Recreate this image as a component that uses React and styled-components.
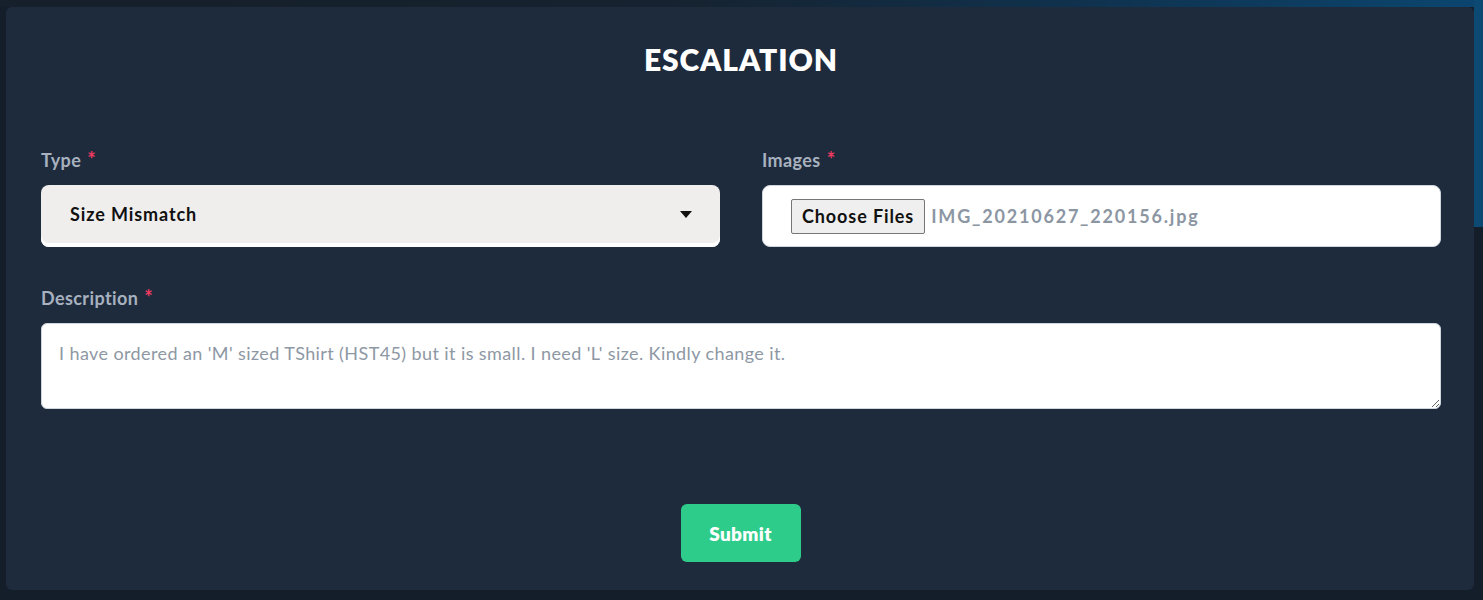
import React from 'react';
import styled, { createGlobalStyle } from 'styled-components';

const GlobalStyle = createGlobalStyle`
  html, body {
    margin: 0;
    padding: 0;
    height: 600px;
    overflow: hidden;
    font-family: Lato, "Open Sans", Arial, sans-serif;
    background: #141d2a;
  }
  * { box-sizing: border-box; }
`;

const Page = styled.div`
  height: 600px;
  padding: 7px 9px 10px 6px;
  background:
    linear-gradient(180deg, #0c4a74 0px, #0c4a74 227px, transparent 227px) right top / 9px 100% no-repeat,
    linear-gradient(90deg, #161f2c 0%, #16222f 45%, #0f3350 75%, #0b4670 100%) top / 100% 7px no-repeat,
    #141d2a;
`;

const Card = styled.form`
  height: 583px;
  background: #1e2b3c;
  border-radius: 6px;
  padding: 38px 33px 0 35px;
  display: flex;
  flex-direction: column;
`;

const Title = styled.h2`
  margin: 0 0 77px;
  text-align: center;
  color: #ffffff;
  font-size: 30px;
  font-weight: 800;
  letter-spacing: 0.9px;
  line-height: 28px;
`;

const Row = styled.div`
  display: grid;
  grid-template-columns: 1fr 1fr;
  gap: 42px;
  margin-bottom: 41px;
`;

const Field = styled.div`
  display: flex;
  flex-direction: column;
`;

const Label = styled.label`
  height: 20px;
  color: #a7b1bf;
  font-size: 18px;
  font-weight: 700;
  letter-spacing: 0.4px;
  line-height: 20px;
  margin-bottom: 15px;

  span {
    color: #ee3a62;
    font-size: 20px;
    line-height: 0;
    margin-left: 6px;
  }
`;

const SelectBox = styled.div`
  height: 62px;
  background: #efeeec;
  border-radius: 8px;
  box-shadow: inset 0 -4px 0 #ffffff;
  display: flex;
  align-items: center;
  justify-content: space-between;
  padding: 0 28px 4px 29px;
  color: #111111;
  font-size: 18px;
  font-weight: 700;
  letter-spacing: 0.9px;
`;

const FileBox = styled.div`
  height: 62px;
  background: #ffffff;
  border: 1px solid #cfd6dd;
  border-radius: 8px;
  display: flex;
  align-items: center;
  padding: 0 0 0 28px;
  gap: 6px;
`;

const FileButton = styled.button`
  height: 35px;
  padding: 0 10px;
  background: #efefef;
  border: 1px solid #767676;
  border-radius: 2px;
  color: #111111;
  font-family: inherit;
  font-size: 18px;
  font-weight: 700;
  letter-spacing: 0.9px;
`;

const FileName = styled.span`
  color: #8c96a3;
  font-size: 18px;
  font-weight: 700;
  letter-spacing: 1.8px;
`;

const TextArea = styled.textarea`
  height: 86px;
  width: 100%;
  resize: vertical;
  background: #ffffff;
  border: 1px solid #cfd6dd;
  border-radius: 6px;
  padding: 18px 17px;
  font-family: inherit;
  font-size: 18px;
  letter-spacing: 0.4px;
  outline: none;

  &::placeholder {
    color: #8e98a4;
  }
`;

const Footer = styled.div`
  display: flex;
  justify-content: center;
  margin-top: 95px;
`;

const SubmitButton = styled.button`
  width: 120px;
  height: 58px;
  margin-right: 1px;
  border: none;
  border-radius: 6px;
  background: #2ecc8a;
  color: #ffffff;
  font-family: inherit;
  font-size: 19px;
  font-weight: 800;
  letter-spacing: 0.3px;
  cursor: pointer;
`;

export default function App() {
  return (
    <>
      <GlobalStyle />
      <Page>
        <Card onSubmit={(e) => e.preventDefault()}>
          <Title>ESCALATION</Title>
          <Row>
            <Field>
              <Label>Type<span>*</span></Label>
              <SelectBox>
                Size Mismatch
                <svg width="12" height="7" viewBox="0 0 12 7">
                  <path d="M0 0h12L6 7z" fill="#111" />
                </svg>
              </SelectBox>
            </Field>
            <Field>
              <Label>Images<span>*</span></Label>
              <FileBox>
                <FileButton type="button">Choose Files</FileButton>
                <FileName>IMG_20210627_220156.jpg</FileName>
              </FileBox>
            </Field>
          </Row>
          <Field>
            <Label>Description<span>*</span></Label>
            <TextArea placeholder="I have ordered an 'M' sized TShirt (HST45) but it is small. I need 'L' size. Kindly change it." />
          </Field>
          <Footer>
            <SubmitButton type="submit">Submit</SubmitButton>
          </Footer>
        </Card>
      </Page>
    </>
  );
}
